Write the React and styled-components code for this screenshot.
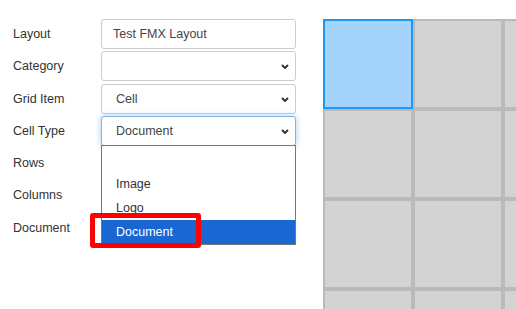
import React from 'react';
import styled, { createGlobalStyle } from 'styled-components';

const GlobalStyle = createGlobalStyle`
html, body {
    margin: 0;
    padding: 0;
    overflow: hidden;
    background: #fff;
}
body {
    font-family: "Liberation Sans", Arial, sans-serif;
}
`;

const Page = styled.div`
display: flex;
align-items: flex-start;
padding: 19px 0 0 13px;
width: 516px;
height: 309px;
box-sizing: border-box;
overflow: hidden;
`;

const Form = styled.div`
display: grid;
grid-template-columns: 88px 195px;
grid-auto-rows: 30px;
row-gap: 2.25px;
align-items: center;
flex-shrink: 0;
`;

const Label = styled.div`
font-size: 12.5px;
color: #333;
`;

const Field = styled.div`
position: relative;
height: 30px;
box-sizing: border-box;
border: 1px solid ${p => (p.$focused ? '#7db5e8' : '#ccc')};
border-radius: 3px;
background: #fff;
display: flex;
align-items: center;
padding-left: ${p => (p.$select ? '14px' : '11px')};
font-size: 12.5px;
color: #444;
box-shadow: ${p => (p.$focused ? '0 0 6px rgba(102, 175, 233, 0.6)' : 'none')};
z-index: ${p => (p.$focused ? 2 : 1)};
`;

const Chevron = styled.svg`
position: absolute;
right: 6px;
top: 50%;
margin-top: -2px;
`;

const List = styled.div`
position: absolute;
left: -1px;
right: -1px;
top: calc(100% + 0.5px);
padding-top: 1.5px;
border: 1px solid #767676;
background: #fff;
z-index: 5;
`;

const Option = styled.div`
position: relative;
height: 24px;
display: flex;
align-items: center;
padding-left: 14px;
font-size: 12.5px;
color: ${p => (p.$active ? '#fff' : '#333')};
background: ${p => (p.$active ? '#1a67d3' : 'transparent')};
`;

const Marker = styled.div`
position: absolute;
left: -12px;
top: -7px;
width: 111px;
height: 35px;
box-sizing: border-box;
border: 5px solid #ff0000;
border-radius: 3px;
`;

const Board = styled.div`
display: grid;
grid-template-columns: repeat(3, 90px);
grid-auto-rows: 90px;
margin-left: 27px;
flex-shrink: 0;
`;

const Cell = styled.div`
box-sizing: border-box;
border: 2px solid ${p => (p.$selected ? '#2196f3' : '#bababa')};
background: ${p => (p.$selected ? '#a3d2fa' : '#d3d3d3')};
`;

const Caret = () => (
    <Chevron width="8" height="5" viewBox="0 0 8 5">
        <polyline points="1,1 4,4 7,1" fill="none" stroke="#333" strokeWidth="1.9" />
    </Chevron>
);

const options = ['', 'Image', 'Logo', 'Document'];

const App = () => {
    return (
        <Page>
            <GlobalStyle />
            <Form>
                <Label>Layout</Label>
                <Field>Test FMX Layout</Field>

                <Label>Category</Label>
                <Field $select><Caret /></Field>

                <Label>Grid Item</Label>
                <Field $select>Cell<Caret /></Field>

                <Label>Cell Type</Label>
                <Field $select $focused>
                    Document
                    <Caret />
                    <List>
                        {options.map(o => (
                            <Option key={o || 'blank'} $active={o === 'Document'}>
                                {o}
                                {o === 'Document' && <Marker />}
                            </Option>
                        ))}
                    </List>
                </Field>

                <Label>Rows</Label>
                <Field />

                <Label>Columns</Label>
                <Field />

                <Label>Document</Label>
                <Field />
            </Form>
            <Board>
                {Array.from({ length: 12 }).map((_, i) => (
                    <Cell key={i} $selected={i === 0} />
                ))}
            </Board>
        </Page>
    );
};

export default App;
